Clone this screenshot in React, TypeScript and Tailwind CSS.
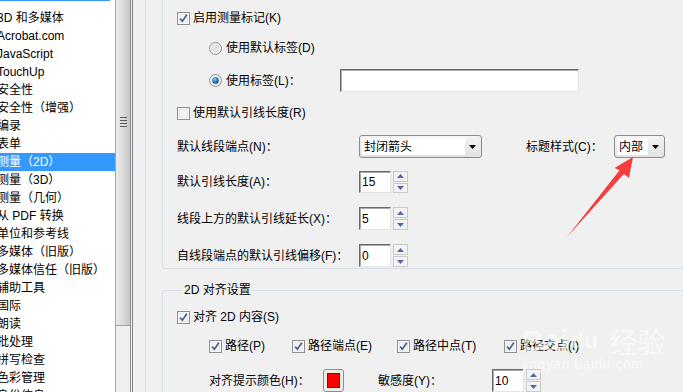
import React from "react"

const items = [
  "3D 和多媒体",
  "Acrobat.com",
  "JavaScript",
  "TouchUp",
  "安全性",
  "安全性（增强）",
  "编录",
  "表单",
  "测量（2D）",
  "测量（3D）",
  "测量（几何）",
  "从 PDF 转换",
  "单位和参考线",
  "多媒体（旧版）",
  "多媒体信任（旧版）",
  "辅助工具",
  "国际",
  "朗读",
  "批处理",
  "拼写检查",
  "色彩管理",
  "身份信息",
]

function Check({ on }: { on?: boolean }) {
  return (
    <svg width="13" height="13" viewBox="0 0 13 13" className="shrink-0">
      <rect x="0.5" y="0.5" width="12" height="12" fill="#fdfdfd" stroke="#8e8f8f" />
      <rect x="2" y="2" width="9" height="9" fill="#e4e6ea" />
      <rect x="3" y="3" width="7" height="7" fill="#f4f4f4" />
      {on && (
        <path d="M3.2 6.6 L5.4 9.2 L9.8 2.8" stroke="#4a5d8c" strokeWidth="1.7" fill="none" />
      )}
    </svg>
  )
}

function Radio({ on }: { on?: boolean }) {
  return (
    <svg width="13" height="13" viewBox="0 0 13 13" className="shrink-0">
      <defs>
        <radialGradient id="dot" cx="0.4" cy="0.35" r="0.7">
          <stop offset="0" stopColor="#8fd3f7" />
          <stop offset="0.5" stopColor="#2a82c8" />
          <stop offset="1" stopColor="#123f6e" />
        </radialGradient>
      </defs>
      <circle cx="6.5" cy="6.5" r="6" fill="#f2f2f2" stroke="#8e8f8f" />
      <circle cx="6.5" cy="6.5" r="4.2" fill="#e2e3e6" />
      {on && <circle cx="6.5" cy="6.5" r="3.2" fill="url(#dot)" />}
    </svg>
  )
}

function Sunken({ w, children }: { w: string; children?: React.ReactNode }) {
  return (
    <div
      className={`${w} h-full bg-white border border-t-[#6a6a6a] border-l-[#6a6a6a] border-r-[#e3e3e3] border-b-[#e3e3e3] shadow-[inset_1px_1px_0_#a8a8a8] flex items-center pl-[2px]`}
    >
      {children}
    </div>
  )
}

function Spin({ value }: { value: string }) {
  return (
    <div className="flex h-full">
      <Sunken w="w-[32px]">{value}</Sunken>
      <div className="ml-[2px] w-[15px] flex flex-col gap-[1px]">
        <div className="flex-1 border border-[#c9c9c9] bg-[#f3f3f3] flex items-center justify-center">
          <svg width="7" height="4" viewBox="0 0 7 4">
            <path d="M0 4 L3.5 0 L7 4 Z" fill="#5268a3" />
          </svg>
        </div>
        <div className="flex-1 border border-[#c9c9c9] bg-[#f3f3f3] flex items-center justify-center">
          <svg width="7" height="4" viewBox="0 0 7 4">
            <path d="M0 0 L3.5 4 L7 0 Z" fill="#5268a3" />
          </svg>
        </div>
      </div>
    </div>
  )
}

function Select({ w, text }: { w: string; text: string }) {
  return (
    <div className={`${w} h-[23px] rounded-[3px] border border-[#8d8d8d] bg-gradient-to-b from-[#f4f4f4] to-[#e2e2e2] p-[2px] flex`}>
      <div className="flex-1 bg-white pl-[2px] flex items-center">{text}</div>
      <div className="w-[14px] flex items-center justify-center">
        <svg width="7" height="4" viewBox="0 0 7 4">
          <path d="M0 0 L7 0 L3.5 4 Z" fill="#000" />
        </svg>
      </div>
    </div>
  )
}

export default function App() {
  return (
    <div className="relative w-[683px] h-[392px] overflow-hidden flex bg-[#f0f0f0] text-[12px] leading-[18px] text-black font-['Liberation_Sans','Noto_Sans_CJK_SC',sans-serif]">
      {/* category list */}
      <div className="w-[115px] shrink-0 bg-white overflow-hidden">
        <div className="h-px w-[110px] bg-[#3399ff]" />
        <div className="pt-[8px]">
          {items.map((t, i) => (
            <div
              key={t}
              className={`h-[18px] whitespace-nowrap -ml-[3px] ${
                i === 8 ? "bg-[#3399ff] text-white" : ""
              }`}
            >
              {t}
            </div>
          ))}
        </div>
      </div>

      {/* scrollbar */}
      <div className="w-[16px] shrink-0 flex flex-col bg-[#eaeaea] border-l border-[#a7a7a7] border-r border-r-[#8c8c8c]">
        <div className="h-[326px] bg-gradient-to-r from-[#ebebeb] via-[#dcdcdc] to-[#c4c4c4] border-b border-[#a0a0a0] flex justify-center">
          <div className="mt-[117px] flex flex-col gap-[2px]">
            <div className="w-[7px] h-px bg-[#5a5a5a]" />
            <div className="w-[7px] h-px bg-[#5a5a5a]" />
            <div className="w-[7px] h-px bg-[#5a5a5a]" />
            <div className="w-[7px] h-px bg-[#5a5a5a]" />
          </div>
        </div>
        <div className="flex-1 bg-[#efefef]" />
      </div>

      <div className="w-px shrink-0" />
      <div className="w-px shrink-0 bg-[#7d8390]" />
      <div className="w-[12px] shrink-0" />
      <div className="w-px shrink-0 bg-[#dde3ea]" />

      {/* settings panel */}
      <div className="pl-[16px] flex flex-col">
        <div className="w-[600px] h-[277px] border-l border-b border-[#d5dfe5] rounded-bl-[3px] pl-[14px] pt-[8px] flex flex-col">
          <div className="h-[20px] flex items-center gap-[3px]">
            <Check on />
            <span>启用测量标记(K)</span>
          </div>
          <div className="mt-[10px] h-[20px] ml-[32px] flex items-center gap-[4px]">
            <Radio />
            <span>使用默认标签(D)</span>
          </div>
          <div className="mt-[11px] h-[23px] ml-[32px] flex items-center">
            <Radio on />
            <span className="ml-[4px] w-[114px]">使用标签(L)：</span>
            <Sunken w="w-[239px]" />
          </div>
          <div className="mt-[11px] h-[20px] flex items-center gap-[3px]">
            <Check />
            <span>使用默认引线长度(R)</span>
          </div>
          <div className="mt-[12px] h-[23px] flex items-center">
            <span className="w-[182px]">默认线段端点(N)：</span>
            <Select w="w-[123px]" text="封闭箭头" />
            <span className="ml-[44px] w-[88px]">标题样式(C)：</span>
            <Select w="w-[51px]" text="内部" />
          </div>
          <div className="mt-[13px] h-[22px] flex items-center">
            <span className="w-[182px]">默认引线长度(A)：</span>
            <Spin value="15" />
          </div>
          <div className="mt-[14px] h-[23px] flex items-center">
            <span className="w-[182px]">线段上方的默认引线延长(X)：</span>
            <Spin value="5" />
          </div>
          <div className="mt-[14px] h-[23px] flex items-center">
            <span className="w-[182px]">自线段端点的默认引线偏移(F)：</span>
            <Spin value="0" />
          </div>
        </div>

        <fieldset className="mt-[12px] w-[600px] border-l border-t border-[#d5dfe5] rounded-tl-[3px] pl-[14px]">
          <legend className="ml-[6px] px-px leading-[18px]">2D 对齐设置</legend>
          <div className="mt-[8px] h-[20px] flex items-center gap-[3px]">
            <Check on />
            <span>对齐 2D 内容(S)</span>
          </div>
          <div className="mt-[9px] h-[20px] ml-[32px] flex items-center">
            <div className="w-[83px] flex items-center gap-[3px]">
              <Check on />
              <span>路径(P)</span>
            </div>
            <div className="w-[105px] flex items-center gap-[3px]">
              <Check on />
              <span>路径端点(E)</span>
            </div>
            <div className="w-[107px] flex items-center gap-[3px]">
              <Check on />
              <span>路径中点(T)</span>
            </div>
            <div className="flex items-center gap-[3px]">
              <Check on />
              <span>路径交点(I)</span>
            </div>
          </div>
          <div className="mt-[13px] h-[23px] ml-[32px] flex items-center">
            <span className="w-[114px]">对齐提示颜色(H)：</span>
            <div className="w-[21px] h-[23px] rounded-[3px] border border-[#8d8d8d] bg-[#ececec] p-[3px] flex">
              <div className="flex-1 bg-[#ff0000] border border-[#9a0000]" />
            </div>
            <span className="ml-[34px] w-[114px]">敏感度(Y)：</span>
            <Spin value="10" />
          </div>
        </fieldset>
      </div>

      {/* faint watermark */}
      <div className="absolute left-[522px] top-[326px] text-white/60 pointer-events-none">
        <div className="flex items-end leading-[30px]">
          <span className="text-[30px] font-bold font-['Liberation_Sans',sans-serif]">Bai</span>
          <span className="text-[22px] font-bold ml-[2px]">du</span>
          <span className="text-[28px] ml-[12px] font-['Noto_Sans_CJK_SC',sans-serif]">经验</span>
        </div>
        <div className="text-[14px] leading-[16px] tracking-[0.5px]">jingyan.baidu.com</div>
      </div>

      {/* red pointer arrow */}
      <svg className="absolute left-0 top-0 pointer-events-none" width="683" height="392">
        <polygon
          points="633,157 629,178 623.8,174 567,237 619.6,170.2 614.5,168"
          fill="#f63c3c"
        />
      </svg>
    </div>
  )
}
